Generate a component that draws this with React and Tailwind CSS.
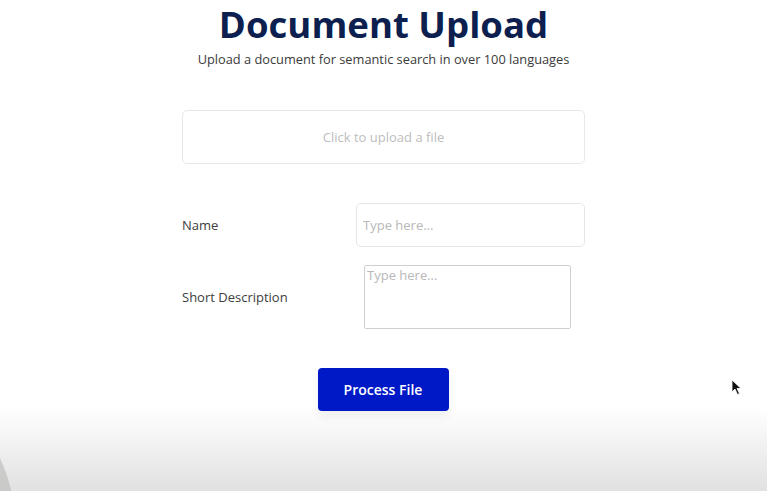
import React from 'react';

const App = () => {
    return (
        <div className="relative h-screen w-full overflow-hidden bg-linear-to-b from-white from-[83%] to-[#e1e1e1] font-['Open_Sans',sans-serif]">
            {/* Main form */}
            <div className="mx-auto flex w-[403px] flex-col">
                <h1 className="text-center text-[36.6px] leading-[48px] font-bold text-[#0c1f4f]">Document Upload</h1>
                <p className="mt-[1px] whitespace-nowrap text-center text-[12.8px] leading-[20px] text-[#3a3a3a]">
                    Upload a document for semantic search in over 100 languages
                </p>

                <button className="mt-[41px] flex h-[54px] w-full items-center justify-center rounded-[5px] border border-[#e8e8e8] bg-white pt-[2px] text-[13px] text-[#bdbdbd]">
                    Click to upload a file
                </button>

                <div className="mt-[39px] grid grid-cols-[174px_1fr] items-center">
                    <label className="pt-[2px] text-[13px] text-[#3d3d3d]">Name</label>
                    <input
                        type="text"
                        placeholder="Type here..."
                        className="h-[44px] w-full rounded-[5px] border border-[#e6e6e6] bg-white px-[6px] text-[13px] placeholder-[#b8b8b8] focus:outline-none"
                    />
                </div>

                <div className="mt-[18px] grid grid-cols-[182px_1fr] items-center">
                    <label className="pt-[2px] text-[13px] text-[#3d3d3d]">Short Description</label>
                    <textarea
                        placeholder="Type here..."
                        className="h-[64px] w-[207px] resize-none rounded-[2px] border border-[#cfcfcf] bg-white px-[2px] py-0 text-[13px] leading-[18px] placeholder-[#b8b8b8] focus:outline-none"
                    />
                </div>

                <div className="mt-[39px] flex justify-center">
                    <button className="ml-[-1px] h-[43px] w-[131px] rounded-[4px] bg-[#0019c6] text-[14px] font-semibold text-white shadow-[0_6px_10px_rgba(0,0,0,0.06)]">
                        Process File
                    </button>
                </div>
            </div>

            {/* Decorative arc at bottom left */}
            <div className="absolute left-[-317px] top-[363px] h-[333px] w-[333px] rounded-full bg-linear-to-b from-[#d4d4d2] to-[#b9b9b7]" />

            {/* Mouse cursor */}
            <svg className="absolute left-[731px] top-[379px]" width="12" height="17" viewBox="0 0 12 17">
                <path d="M1 1 L1 13 L4 10 L6.5 15.5 L8.5 14.5 L6 9.5 L10 9.5 Z" fill="#111" stroke="#fff" strokeWidth="0.8" />
            </svg>
        </div>
    );
};

export default App;
